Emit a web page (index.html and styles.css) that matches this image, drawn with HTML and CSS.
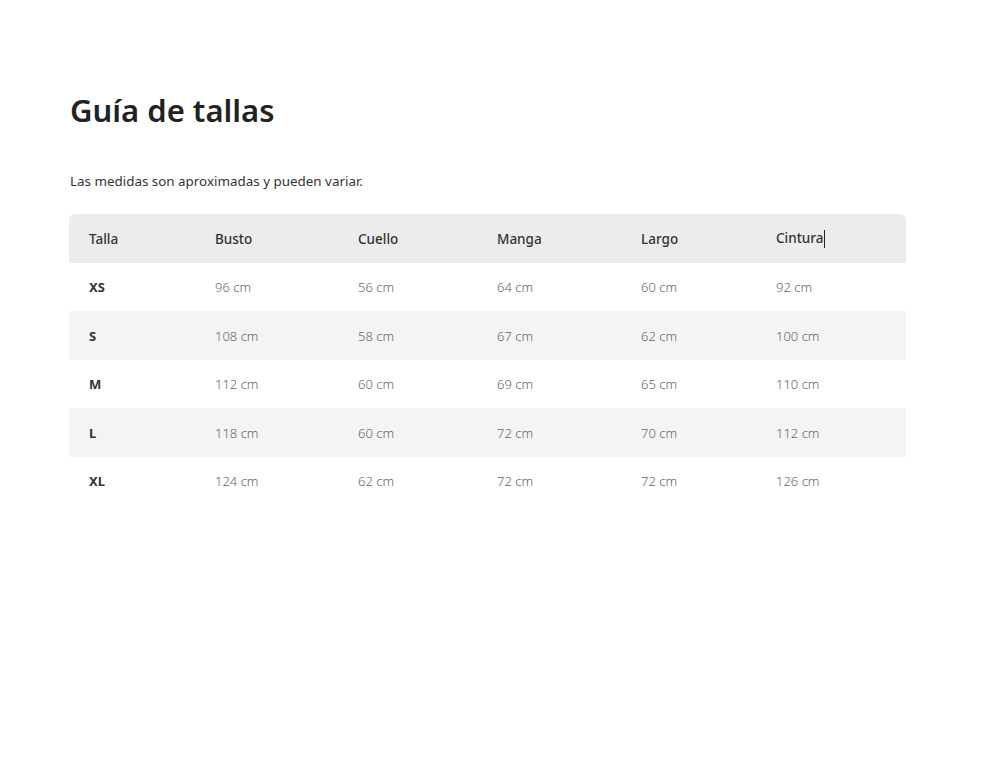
FILE: index.html
```html
<!DOCTYPE html>
<html lang="es">
<head>
<meta charset="utf-8">
<title>Guía de tallas</title>
<link rel="stylesheet" href="styles.css">
</head>
<body>
<main class="page">
  <h1 class="title">Guía de tallas</h1>
  <p class="note">Las medidas son aproximadas y pueden variar.</p>
  <table class="sizes">
    <colgroup>
      <col class="c1"><col class="c2"><col class="c3"><col class="c4"><col class="c5"><col class="c6">
    </colgroup>
    <thead>
      <tr><th>Talla</th><th>Busto</th><th>Cuello</th><th>Manga</th><th>Largo</th><th>Cintura<span class="caret"></span></th></tr>
    </thead>
    <tbody>
      <tr><td class="size">XS</td><td>96 cm</td><td>56 cm</td><td>64 cm</td><td>60 cm</td><td>92 cm</td></tr>
      <tr><td class="size">S</td><td>108 cm</td><td>58 cm</td><td>67 cm</td><td>62 cm</td><td>100 cm</td></tr>
      <tr><td class="size">M</td><td>112 cm</td><td>60 cm</td><td>69 cm</td><td>65 cm</td><td>110 cm</td></tr>
      <tr><td class="size">L</td><td>118 cm</td><td>60 cm</td><td>72 cm</td><td>70 cm</td><td>112 cm</td></tr>
      <tr><td class="size">XL</td><td>124 cm</td><td>62 cm</td><td>72 cm</td><td>72 cm</td><td>126 cm</td></tr>
    </tbody>
  </table>
</main>
</body>
</html>
```
FILE: styles.css
```css
html, body {
  margin: 0;
  padding: 0;
  background: #ffffff;
}
body {
  font-family: "Noto Sans", "Liberation Sans", sans-serif;
  color: #222;
}
.page {
  padding: 90px 0 0 69px;
}
.title {
  margin: 0 0 0 1px;
  font-size: 31px;
  line-height: 40px;
  font-weight: 600;
  color: #222;
  letter-spacing: 0;
}
.note {
  margin: 42px 0 0 1px;
  font-size: 13.4px;
  line-height: 18px;
  color: #333;
}
.sizes {
  margin-top: 24px;
  width: 837px;
  border-collapse: separate;
  border-spacing: 0;
  table-layout: fixed;
}
.c1 { width: 126px; }
.c2 { width: 143px; }
.c3 { width: 139px; }
.c4 { width: 144px; }
.c5 { width: 135px; }
.c6 { width: 150px; }
.sizes th, .sizes td {
  height: 47.5px;
  padding: 1px 0 0 20px;
  text-align: left;
  vertical-align: middle;
  font-size: 13.5px;
}
.sizes th {
  background: #ececec;
  font-weight: 500;
  color: #333;
}
.sizes th:first-child { border-top-left-radius: 6px; }
.sizes th:last-child { border-top-right-radius: 6px; }
.sizes td {
  color: #666;
  font-weight: 300;
  font-size: 13px;
}
.sizes td.size {
  font-weight: 700;
  color: #333;
}
.sizes tbody tr:nth-child(even) td {
  background: #f4f4f4;
}
.caret {
  display: inline-block;
  width: 1px;
  height: 18px;
  background: #222;
  vertical-align: middle;
  margin-left: 1px;
}
```
